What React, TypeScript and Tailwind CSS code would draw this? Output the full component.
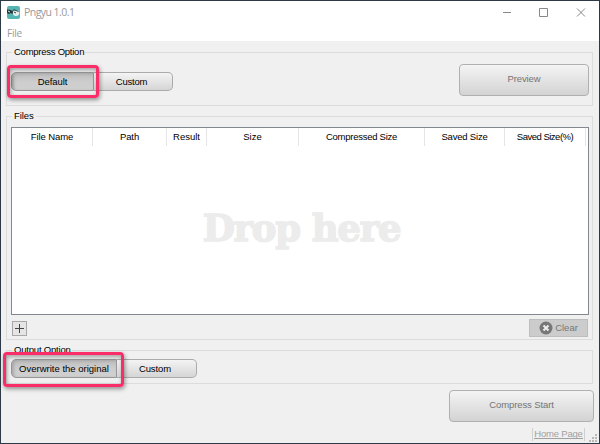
import type { ReactNode } from "react";

function Group({ title, titleWidth, className, children }: { title: string; titleWidth: string; className: string; children: ReactNode }) {
  return (
    <section className={`relative ml-[5px] w-[587px] shrink-0 border border-[#dcdcdc] ${className}`}>
      <h2 className={`absolute -top-[8px] left-[5px] h-[15px] bg-[#f0f0f0] pl-[2px] leading-[14px] whitespace-nowrap ${titleWidth}`}>{title}</h2>
      {children}
    </section>
  );
}

const pressed = "border border-[#969696] rounded-l-[5px] bg-linear-to-b from-[#bdbdbd] via-[#cdcdcd] to-[#d0d0d0] shadow-[inset_2px_1px_3px_#aaaaaa]";
const raised = "border border-l-0 border-[#ababab] rounded-r-[5px] bg-linear-to-b from-[#f4f4f4] to-[#d5d5d5]";
const large = "flex items-center justify-center rounded-[4px] border border-[#b0b0b0] bg-linear-to-b from-[#f4f4f4] to-[#d3d3d3] text-[#747474]";
const outline = "pointer-events-none absolute rounded-[4px] border-[3px] border-[#fb2d68] shadow-[1px_2px_4px_#00000066,inset_1px_2px_4px_#00000055]";

const columns = [
  { name: "File Name", size: "w-[81px]", tracking: "tracking-[-0.1px]" },
  { name: "Path", size: "w-[74px]", tracking: "tracking-[-0.1px]" },
  { name: "Result", size: "w-[40px]", tracking: "tracking-[0px]" },
  { name: "Size", size: "w-[92px]", tracking: "tracking-[0px]" },
  { name: "Compressed Size", size: "w-[126px]", tracking: "tracking-[-0.25px]" },
  { name: "Saved Size", size: "w-[80px]", tracking: "tracking-[-0.2px]" },
  { name: "Saved Size(%)", size: "w-[81px]", tracking: "tracking-[-0.5px]" },
];

export default function App() {
  return (
    <div className="h-[444px] w-[600px] overflow-hidden bg-[#2d3a46] px-px py-px font-['Liberation_Sans',sans-serif] text-[9.5px] text-black">
      <main className="flex h-[442px] w-[598px] flex-col bg-[#f0f0f0]">
        <header className="h-[40px] shrink-0 bg-white text-[#999999]">
          <div className="flex h-[23px] items-center pl-[6px]">
            <svg width="13" height="13" viewBox="0 0 13 13" aria-hidden="true">
              <rect width="13" height="13" rx="2" fill="#55b5b4" />
              <path d="M0 3.5 4 4l1 1 2-1 4 1v4H7L4 7 2 8 0 7Z" fill="#24383b" />
              <ellipse cx="9" cy="7" rx="3.2" ry="3" fill="#e7eeee" />
              <path d="m6.5 3.5 5 2M7 6l2 1" stroke="#283b3d" />
              <path d="m1 5 2 1" stroke="#d9eeee" />
            </svg>
            <span className="ml-[4px] font-['Open_Sans',sans-serif] text-[10.5px] tracking-[-0.55px]">Pngyu 1.0.1</span>
            <svg className="ml-auto mr-[13px]" width="84" height="13" viewBox="0 0 84 13" fill="none" stroke="#888888" aria-hidden="true">
              <path d="M1 6.5h8M37.5 2.5h8v8h-8ZM75 2.5l8 8M83 2.5l-8 8" />
            </svg>
          </div>
          <div className="pl-[6px] font-['Open_Sans',sans-serif] text-[10px] leading-[18px] tracking-[-0.2px]">File</div>
        </header>

        <Group title="Compress Option" titleWidth="w-[73px] tracking-[-0.25px]" className="mt-[11px] h-[54px]">
          <div className="flex items-start pt-[11px] pl-[4px]">
            <div className="mt-[8px] flex h-[19px]">
              <button className={`${pressed} w-[83px] leading-[17px] tracking-[-0.1px]`}>Default</button>
              <button className={`${raised} w-[79px] pr-[3px] leading-[16px] tracking-[-0.2px]`}>Custom</button>
            </div>
            <button className={`${large} mr-[3px] ml-auto h-[32px] w-[130px] pb-[1px] tracking-[-0.1px]`}>Preview</button>
          </div>
          <div className={`${outline} top-[12px] left-0 h-[33px] w-[92px]`} />
        </Group>

        <Group title="Files" titleWidth="w-[24px] tracking-[-0.1px]" className="mt-[10px] h-[224px]">
          <div className="ml-[4px] mt-[10px] flex h-[188px] w-[578px] flex-col border border-[#828790] bg-white">
            <div className="flex h-[18px]">
              {columns.map((column) => (
                <div key={column.name} className={`${column.size} ${column.tracking} shrink-0 border-r border-[#e5e5e5] text-center leading-[17px] whitespace-nowrap`}>{column.name}</div>
              ))}
            </div>
            <div className="flex flex-1 items-center justify-center pb-[3px] pl-[3px]">
              <span className="font-['DejaVu_Serif',serif] text-[37px] leading-none font-bold tracking-[-1.2px] text-[#ececec] [-webkit-text-stroke:1.5px_#ececec] [paint-order:stroke]">Drop here</span>
            </div>
          </div>
          <div className="flex items-center justify-between pt-[4px] pr-[4px] pl-[5px]">
            <button className="flex h-[15px] w-[15px] items-center justify-center border border-[#a8a8a8] bg-[#e5e5e5]" aria-label="Add">
              <svg width="9" height="9" stroke="#444444"><path d="M4.5 0v9M0 4.5h9" /></svg>
            </button>
            <button className="flex h-[18px] w-[59px] items-center justify-center gap-[2px] border border-[#bdbdbd] bg-[#cccccc] leading-[16px] text-[#777777]">
              <svg width="14" height="14" viewBox="0 0 14 14"><circle cx="7" cy="7" r="6.5" fill="#777777" /><path d="m4.5 4.5 5 5m0-5-5 5" stroke="#eeeeee" strokeWidth="2" /></svg>
              Clear
            </button>
          </div>
        </Group>

        <Group title="Output Option" titleWidth="w-[60px] tracking-[-0.2px]" className="mt-[10px] h-[34px]">
          <div className="mt-[8px] ml-[4px] flex h-[19px]">
            <button className={`${pressed} w-[106px] leading-[17px] whitespace-nowrap`}>Overwrite the original</button>
            <button className={`${raised} w-[80px] pr-[3px] leading-[16px] tracking-[-0.1px]`}>Custom</button>
          </div>
          <div className={`${outline} top-[1px] -left-[4px] h-[35px] w-[121px]`} />
        </Group>

        <button className={`${large} mt-[6px] mr-[5px] h-[32px] w-[145px] shrink-0 self-end pb-[1px] tracking-[-0.1px]`}>Compress Start</button>
        <footer className="mt-[6px] flex h-[15px] items-start justify-end">
          <div className="mr-[4px] flex h-[13px] w-[53px] justify-center border-x border-[#d0d0d0] text-[#a0a0a0]">
            <a className="h-[11px] border-b border-[#a0a0a0] leading-[12px] tracking-[-0.2px] whitespace-nowrap">Home Page</a>
          </div>
          <svg className="mt-[6px] mr-[2px]" width="8" height="8" fill="#b8b8b8" aria-hidden="true"><path d="M6 0h2v2H6ZM3 3h2v2H3Zm3 0h2v2H6ZM0 6h2v2H0Zm3 0h2v2H3Zm3 0h2v2H6Z" /></svg>
        </footer>
      </main>
    </div>
  );
}
